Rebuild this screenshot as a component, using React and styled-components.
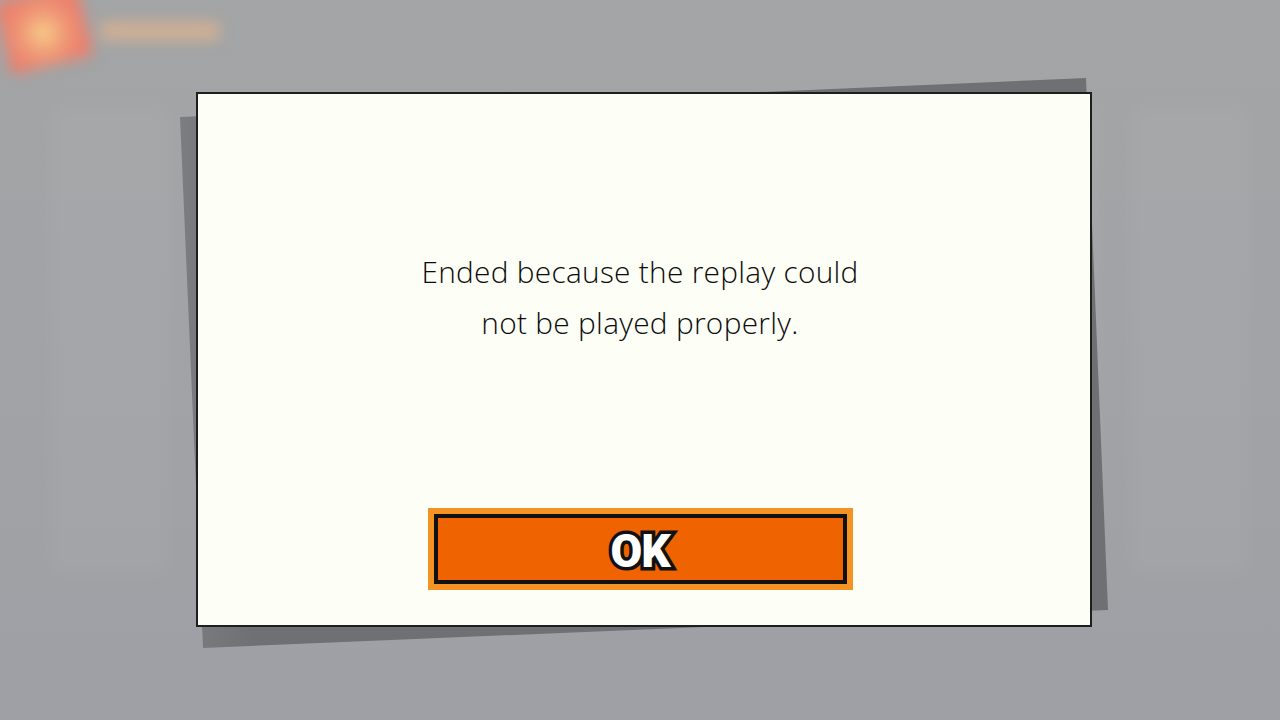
import React from "react";
import styled, { createGlobalStyle } from "styled-components";

const GlobalStyle = createGlobalStyle`
  html, body {
    margin: 0;
    padding: 0;
    background: #a2a4a7;
  }
  * {
    box-sizing: border-box;
  }
`;

const Screen = styled.div`
  position: relative;
  width: 1280px;
  height: 720px;
  overflow: hidden;
  background: linear-gradient(180deg, #a3a5a6 0%, #a0a2a6 60%, #9ea0a5 100%);
  font-family: "Open Sans", "Noto Sans", sans-serif;
`;

/* blurred menu sitting behind the dialog */
const Backdrop = styled.div`
  display: flex;
  flex-direction: column;
  gap: 40px;
  padding: 0;
  filter: blur(7px);
`;

const MenuHeader = styled.div`
  display: flex;
  align-items: center;
  gap: 14px;
  margin: -8px 0 0 2px;
`;

const MenuIcon = styled.div`
  width: 84px;
  height: 74px;
  transform: rotate(-14deg);
  background: radial-gradient(circle at 48% 55%, #f8d58a 0%, #f1a07a 30%, #ec806c 65%);
  border-radius: 4px;
`;

const MenuLabel = styled.div`
  width: 120px;
  height: 20px;
  margin-top: 4px;
  border-radius: 6px;
  background: #d8b191;
  opacity: 0.8;
`;

const CardRow = styled.div`
  display: flex;
  gap: 30px;
  padding-left: 50px;
`;

const GhostCard = styled.div`
  width: ${(p) => p.$w}px;
  height: 470px;
  border-radius: 16px;
  background: rgba(255, 255, 255, 0.035);
`;

const Overlay = styled.div`
  position: absolute;
  inset: 0;
  display: flex;
  align-items: flex-start;
  padding: 92px 0 0 196px;
`;

const Dialog = styled.div`
  position: relative;
  width: 896px;
  height: 535px;
`;

/* tilted sheet peeking out behind the panel */
const BackSheet = styled.div`
  position: absolute;
  left: -16px;
  top: -14px;
  width: 932px;
  height: 570px;
  background: linear-gradient(90deg, #7b7d81 0%, #6e7074 8%, #6e7074 100%);
  clip-path: polygon(0px 39px, 906px 0px, 928px 532px, 23px 570px);
`;

const Panel = styled.div`
  position: relative;
  width: 100%;
  height: 100%;
  display: flex;
  flex-direction: column;
  align-items: center;
  background: #fdfef6;
  border: 2px solid #1e1e1e;
  padding-right: 8px;
`;

const Message = styled.p`
  margin: 152px 0 0;
  font-size: 29.8px;
  line-height: 51px;
  font-weight: 300;
  color: #0c0c0c;
  text-align: center;
  letter-spacing: 0.3px;
`;

const OkButton = styled.button`
  margin-top: 166px;
  width: 413px;
  height: 70px;
  display: flex;
  align-items: center;
  justify-content: center;
  padding: 0;
  background: #ef6400;
  border: 4px solid #111;
  box-shadow: 0 0 0 6px #f39323;
  cursor: pointer;
`;

const OkLabel = styled.span`
  font-family: "Roboto", "Open Sans", sans-serif;
  font-weight: 900;
  font-size: 46px;
  line-height: 1;
  color: #fff;
  -webkit-text-stroke: 7px #111;
  paint-order: stroke fill;
  text-shadow: 2px 3px 0 #111;
  letter-spacing: -1px;
  margin-top: 4px;
`;

export default function App() {
  return (
    <>
      <GlobalStyle />
      <Screen>
        <Backdrop>
          <MenuHeader>
            <MenuIcon />
            <MenuLabel />
          </MenuHeader>
          <CardRow>
            <GhostCard $w={120} />
            <GhostCard $w={900} />
            <GhostCard $w={120} />
          </CardRow>
        </Backdrop>
        <Overlay>
          <Dialog>
            <BackSheet />
            <Panel>
              <Message>
                Ended because the replay could
                <br />
                not be played properly.
              </Message>
              <OkButton type="button">
                <OkLabel>OK</OkLabel>
              </OkButton>
            </Panel>
          </Dialog>
        </Overlay>
      </Screen>
    </>
  );
}
